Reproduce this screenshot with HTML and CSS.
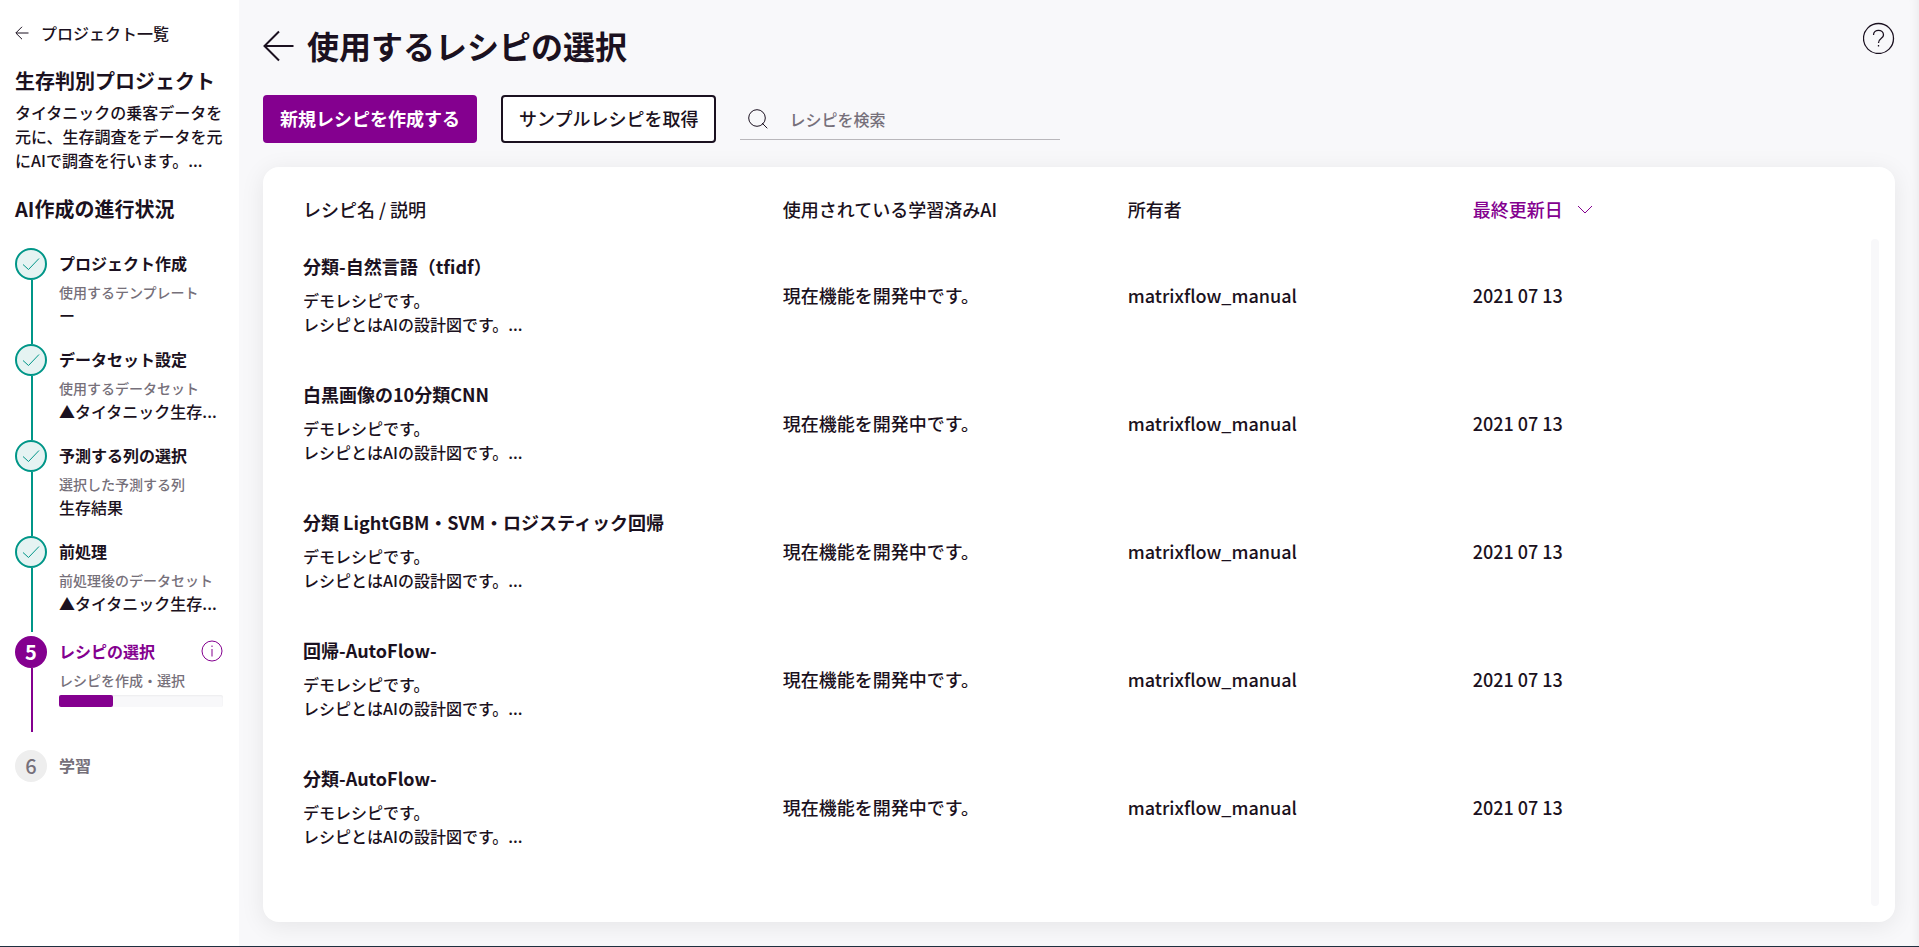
FILE: index.html
```html
<!DOCTYPE html>
<html lang="ja">
  <head>
    <meta charset="UTF-8" />
    <meta name="viewport" content="width=device-width, initial-scale=1.0" />
    <title>使用するレシピの選択</title>
    <link rel="stylesheet" href="styles.css">
  </head>
  <body>
    <aside class="sidebar">
      <a class="back-link" href="#">
        <svg width="14" height="14" viewBox="0 0 14 14"><path d="M13.5 7H1M7 .8L.8 7L7 13.2" /></svg>
        プロジェクト一覧
      </a>
      <h2 class="project-name">生存判別プロジェクト</h2>
      <p class="project-desc">タイタニックの乗客データを元に、生存調査をデータを元にAIで調査を行います。...</p>
      <h2 class="progress-title">AI作成の進行状況</h2>
      <ol class="steps">
        <li class="step done">
          <span class="mark"><svg width="18" height="14" viewBox="0 0 18 14"><path d="M1 7.5L6.5 12.5L17 1.5" /></svg></span>
          <div class="step-body">
            <h3>プロジェクト作成</h3>
            <p class="label">使用するテンプレート</p>
            <p class="value">ー</p>
          </div>
        </li>
        <li class="step done">
          <span class="mark"><svg width="18" height="14" viewBox="0 0 18 14"><path d="M1 7.5L6.5 12.5L17 1.5" /></svg></span>
          <div class="step-body">
            <h3>データセット設定</h3>
            <p class="label">使用するデータセット</p>
            <p class="value">▲タイタニック生存...</p>
          </div>
        </li>
        <li class="step done">
          <span class="mark"><svg width="18" height="14" viewBox="0 0 18 14"><path d="M1 7.5L6.5 12.5L17 1.5" /></svg></span>
          <div class="step-body">
            <h3>予測する列の選択</h3>
            <p class="label">選択した予測する列</p>
            <p class="value">生存結果</p>
          </div>
        </li>
        <li class="step done">
          <span class="mark"><svg width="18" height="14" viewBox="0 0 18 14"><path d="M1 7.5L6.5 12.5L17 1.5" /></svg></span>
          <div class="step-body">
            <h3>前処理</h3>
            <p class="label">前処理後のデータセット</p>
            <p class="value">▲タイタニック生存...</p>
          </div>
        </li>
        <li class="step current">
          <span class="mark">5</span>
          <div class="step-body">
            <h3>
              レシピの選択
              <button class="info" type="button" aria-label="情報">
                <svg width="22" height="22" viewBox="0 0 22 22"><circle cx="11" cy="11" r="10" /><path d="M11 9V16.5M11 5.5V7" /></svg>
              </button>
            </h3>
            <p class="label">レシピを作成・選択</p>
            <div class="bar"><div class="bar-fill" style="width: 33%"></div></div>
          </div>
        </li>
        <li class="step todo">
          <span class="mark">6</span>
          <div class="step-body">
            <h3>学習</h3>
          </div>
        </li>
      </ol>
    </aside>

    <main class="main">
      <header class="header">
        <a class="header-back" href="#" aria-label="戻る">
          <svg width="32" height="32" viewBox="0 0 32 32"><path d="M30.5 16H1.5M16 1.5L1.5 16L16 30.5" /></svg>
        </a>
        <h1>使用するレシピの選択</h1>
        <button class="help" type="button" aria-label="ヘルプ">
          <svg width="32" height="32" viewBox="0 0 32 32"><circle cx="15.5" cy="16.5" r="15" /><path d="M10.5 13C10.5 6.8 20.5 6.8 20.5 13C20.5 16.5 15.5 16 15.5 21M15.5 23V24.5" /></svg>
        </button>
      </header>

      <div class="toolbar">
        <button class="btn primary" type="button">新規レシピを作成する</button>
        <button class="btn" type="button">サンプルレシピを取得</button>
        <label class="search">
          <svg width="20" height="20" viewBox="0 0 20 20"><circle cx="9" cy="9" r="8.3" /><path d="M14 14L19.3 19.3" /></svg>
          <input type="text" placeholder="レシピを検索" aria-label="レシピを検索" />
        </label>
      </div>

      <section class="card">
        <table class="recipes">
          <thead>
            <tr>
              <th class="col-name">レシピ名 / 説明</th>
              <th class="col-ai">使用されている学習済みAI</th>
              <th class="col-owner">所有者</th>
              <th class="sorted">
                <button type="button">
                  最終更新日
                  <svg width="16" height="12" viewBox="0 0 16 12"><path d="M1 3L8 10L15 3" /></svg>
                </button>
              </th>
            </tr>
          </thead>
          <tbody>
            <tr>
              <td><h4>分類-自然言語（tfidf）</h4><p>デモレシピです。<br />レシピとはAIの設計図です。...</p></td>
              <td>現在機能を開発中です。</td>
              <td>matrixflow_manual</td>
              <td>2021 07 13</td>
            </tr>
            <tr>
              <td><h4>白黒画像の10分類CNN</h4><p>デモレシピです。<br />レシピとはAIの設計図です。...</p></td>
              <td>現在機能を開発中です。</td>
              <td>matrixflow_manual</td>
              <td>2021 07 13</td>
            </tr>
            <tr>
              <td><h4>分類 LightGBM・SVM・ロジスティック回帰</h4><p>デモレシピです。<br />レシピとはAIの設計図です。...</p></td>
              <td>現在機能を開発中です。</td>
              <td>matrixflow_manual</td>
              <td>2021 07 13</td>
            </tr>
            <tr>
              <td><h4>回帰-AutoFlow-</h4><p>デモレシピです。<br />レシピとはAIの設計図です。...</p></td>
              <td>現在機能を開発中です。</td>
              <td>matrixflow_manual</td>
              <td>2021 07 13</td>
            </tr>
            <tr>
              <td><h4>分類-AutoFlow-</h4><p>デモレシピです。<br />レシピとはAIの設計図です。...</p></td>
              <td>現在機能を開発中です。</td>
              <td>matrixflow_manual</td>
              <td>2021 07 13</td>
            </tr>
          </tbody>
        </table>
        <div class="scroll-rail"></div>
      </section>
    </main>
  </body>
</html>
```

FILE: styles.css
```css
* {
  margin: 0;
  padding: 0;
  box-sizing: border-box;
}
body {
  display: flex;
  min-height: 100vh;
  border-bottom: 1px solid #1f3040;
  background: #f8f8fa;
  color: #1b1120;
  font-family: "Noto Sans CJK JP", sans-serif;
  font-size: 16px;
  font-weight: 500;
  line-height: 24px;
}
h1,
h2,
h3,
h4 {
  font-weight: 700;
}
a {
  color: inherit;
  text-decoration: none;
}
button,
input {
  border: none;
  background: none;
  color: inherit;
  font: inherit;
}
button {
  cursor: pointer;
}
svg {
  display: block;
  flex: none;
  fill: none;
  stroke: currentColor;
}

/* sidebar */
.sidebar {
  flex: none;
  width: 239px;
  padding: 21px 16px 0 15px;
  background: #fff;
}
.back-link {
  display: flex;
  align-items: center;
  gap: 12px;
}
.project-name,
.progress-title {
  font-size: 20px;
  line-height: 30px;
}
.project-name {
  margin-top: 21px;
}
.project-desc {
  margin-top: 4px;
}
.progress-title {
  margin-top: 22px;
}
.steps {
  margin-top: 24px;
  list-style: none;
}
.step {
  position: relative;
  display: flex;
  gap: 12px;
  height: 96px;
}
.step::before {
  content: "";
  position: absolute;
  left: 16px;
  top: 32px;
  width: 2px;
  height: 64px;
  background: #009688;
}
.mark {
  display: flex;
  flex: none;
  align-items: center;
  justify-content: center;
  width: 32px;
  height: 32px;
  border-radius: 50%;
  font-size: 20px;
}
.done .mark {
  border: 2px solid #009688;
  background: #e5f3f2;
  color: #009688;
}
.step-body {
  flex: 1;
  min-width: 0;
}
.step h3 {
  display: flex;
  align-items: center;
  justify-content: space-between;
  margin-bottom: 1px;
  font-size: 16px;
  line-height: 30px;
}
.label {
  color: #76707a;
  font-size: 14px;
  line-height: 26px;
  white-space: nowrap;
}
.value {
  line-height: 20px;
  white-space: nowrap;
}
.current {
  height: 114px;
  margin-top: 4px;
}
.current::before {
  background: #84008f;
}
.current .mark {
  background: #84008f;
  color: #fff;
  font-weight: 700;
}
.current h3 {
  color: #84008f;
}
.info {
  height: 22px;
}
.bar {
  height: 12px;
  margin-top: 2px;
  border-radius: 2px;
  background: #f8f8fa;
  box-shadow: inset 0 1px 2px #0000000d;
}
.bar-fill {
  height: 100%;
  border-radius: 2px;
  background: #84008f;
}
.todo::before {
  display: none;
}
.todo .mark {
  background: #eee;
}
.todo .mark,
.todo h3 {
  color: #76707a;
}

/* main */
.main {
  display: flex;
  flex: 1;
  flex-direction: column;
  min-width: 0;
  padding: 22px 24px 24px;
  box-shadow: inset -12px 0 12px -12px #00000014;
}
.header {
  display: flex;
  align-items: center;
  gap: 12px;
}
.header-back svg {
  stroke-width: 2;
}
h1 {
  padding-bottom: 2px;
  font-size: 32px;
  line-height: 46px;
}
.help {
  align-self: flex-start;
  margin-left: auto;
}
.help svg {
  stroke-width: 1.3;
}
.toolbar {
  display: flex;
  gap: 24px;
  margin: 25px 0 24px;
}
.btn {
  height: 48px;
  padding: 0 16px 3px;
  border: 2px solid #1b1120;
  border-radius: 4px;
  background: #fff;
  font-size: 18px;
}
.primary {
  padding: 0 15px 3px;
  border-color: #84008f;
  background: #84008f;
  color: #fff;
  font-weight: 700;
}
.search {
  display: flex;
  align-items: center;
  gap: 21px;
  width: 320px;
  height: 45px;
  padding: 3px 8px 0;
  border-bottom: 1px solid #b9b7bb;
}
.search input {
  flex: 1;
  min-width: 0;
  outline: none;
}
.search input::placeholder {
  color: #76707a;
}

/* recipe list */
.card {
  display: flex;
  flex: 1;
  padding: 16px 16px 16px 40px;
  border-radius: 16px;
  background: #fff;
  box-shadow: 0 4px 24px #00000014;
}
.recipes {
  flex: 1;
  align-self: flex-start;
  border-collapse: collapse;
  table-layout: fixed;
  font-size: 18px;
}
.recipes th {
  height: 52px;
  font-weight: 500;
  text-align: left;
}
.col-name {
  width: 30.6%;
}
.col-ai,
.col-owner {
  width: 22%;
}
.sorted button {
  display: flex;
  align-items: center;
  gap: 14px;
  color: #84008f;
}
.recipes td {
  height: 128px;
  padding-bottom: 8px;
  vertical-align: middle;
}
.recipes h4 {
  margin-bottom: 10px;
  font-size: 18px;
}
.recipes p {
  font-size: 16px;
}
.scroll-rail {
  flex: none;
  width: 8px;
  margin-top: 56px;
  border-radius: 4px;
  background: #f8f8fa;
}
```
